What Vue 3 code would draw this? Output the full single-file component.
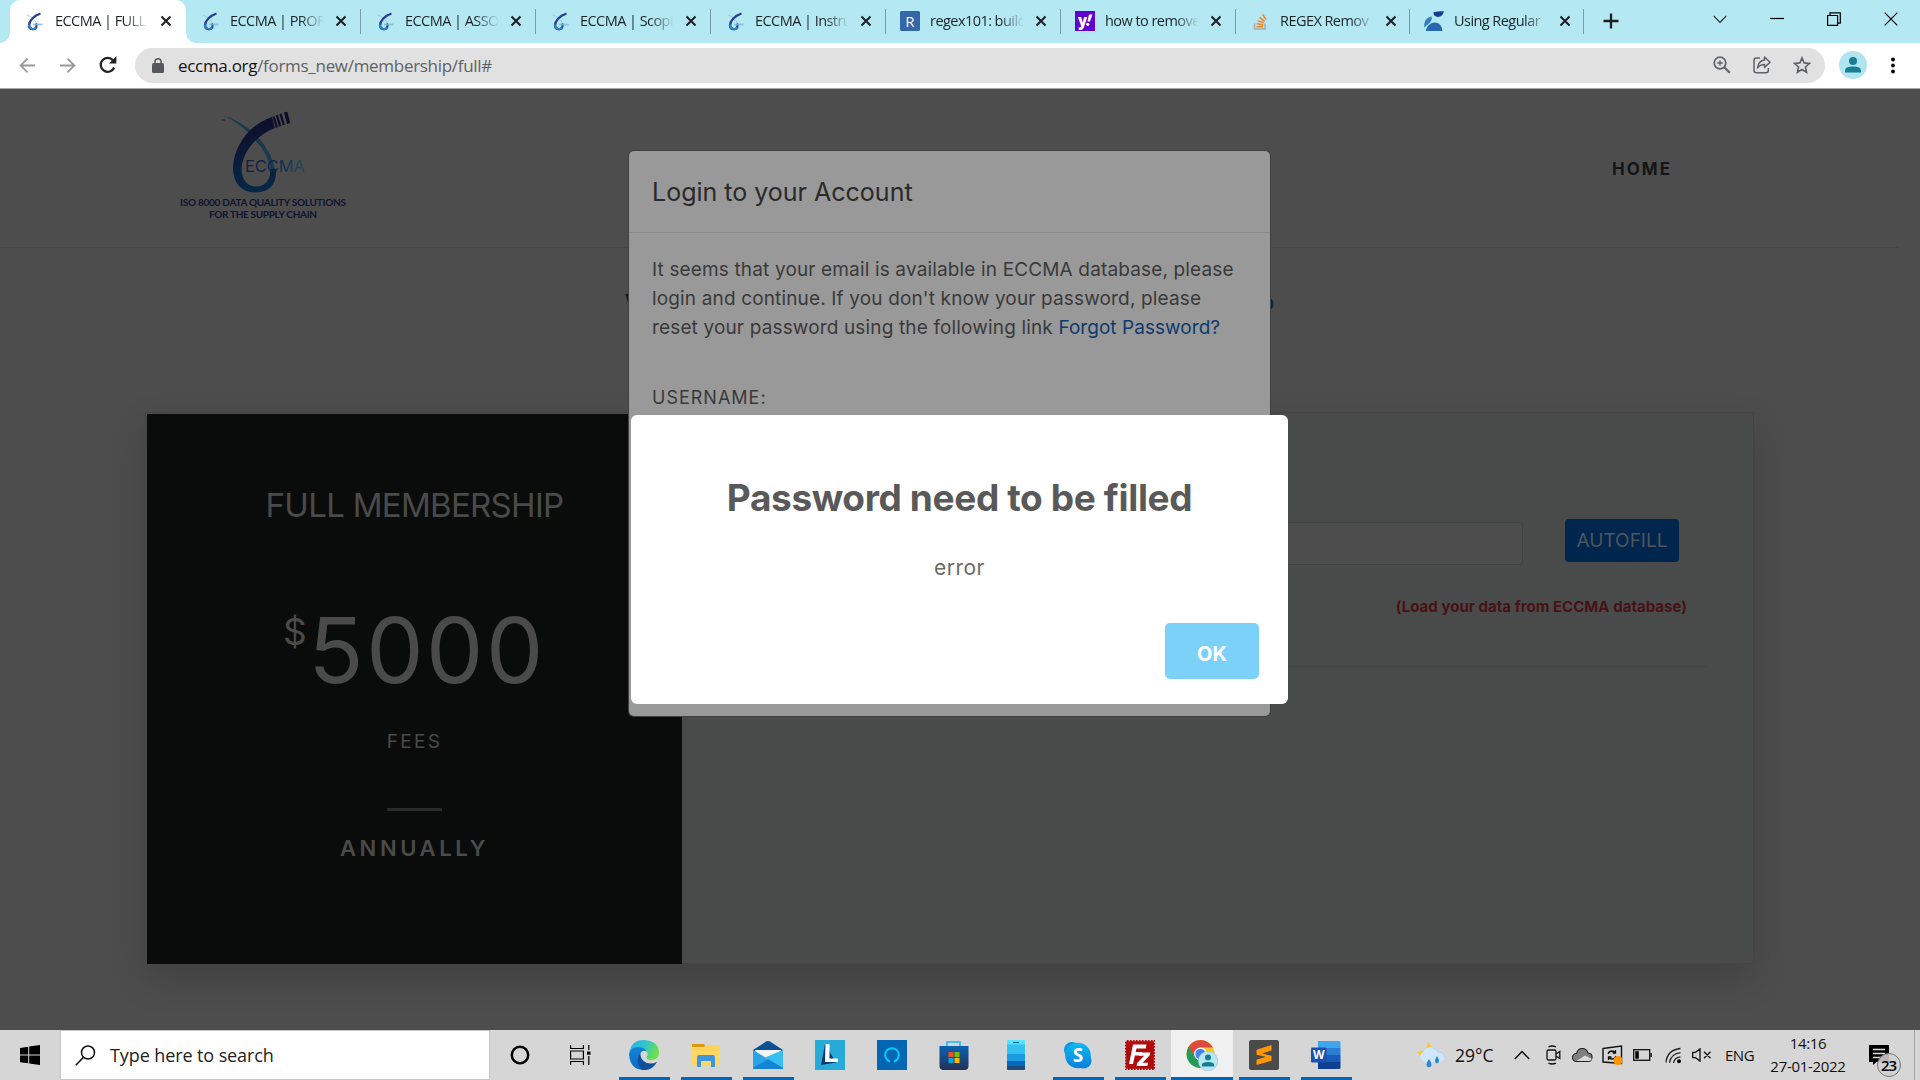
<script setup>
const tabs = [
  { title: 'ECCMA | FULL', icon: 'eccma', active: true },
  { title: 'ECCMA | PROF', icon: 'eccma' },
  { title: 'ECCMA | ASSO', icon: 'eccma' },
  { title: 'ECCMA | Scopi', icon: 'eccma' },
  { title: 'ECCMA | Instru', icon: 'eccma' },
  { title: 'regex101: build', icon: 'regex' },
  { title: 'how to remove', icon: 'yahoo' },
  { title: 'REGEX Remov', icon: 'stack' },
  { title: 'Using Regular', icon: 'using' },
]

const apps = [
  { name: 'edge', open: true },
  { name: 'explorer', open: true },
  { name: 'mail', open: true },
  { name: 'lens' },
  { name: 'alexa' },
  { name: 'store' },
  { name: 'phone' },
  { name: 'skype', open: true },
  { name: 'filezilla', open: true },
  { name: 'chrome', open: true, active: true },
  { name: 'sublime', open: true },
  { name: 'word', open: true },
]
</script>

<template>
  <div class="screen">
    <div class="tabstrip">
      <div v-for="(t, i) in tabs" :key="i" class="tab" :class="{ active: t.active }">
        <svg v-if="t.icon === 'eccma'" class="fav" viewBox="0 0 17 19">
          <path d="M1 3C8 6 11 10 10.500 14" fill="none" stroke="#8cc3e2" stroke-width=".8" />
          <path d="M14.500 1.500C8 3.500 3 9 3 13.500C3 18 9 18 10.200 15.500C10.800 14 10.600 12.500 10 11.500" fill="none" stroke="#2b3f8f" stroke-width="2.300" />
          <path d="M3 12.500C3 18 9 18 10.200 15.500" fill="none" stroke="#2f7fc8" stroke-width="2.300" />
          <path d="M7 12.500h9.500" stroke="#7bb8de" stroke-width="1.800" opacity=".8" />
        </svg>
        <svg v-else-if="t.icon === 'regex'" class="fav sq" viewBox="0 0 20 20">
          <rect width="20" height="20" rx="1.500" fill="#3566a8" />
          <text x="10" y="15.500" text-anchor="middle" fill="#fff" font-family="Open Sans, sans-serif" font-size="15">R</text>
        </svg>
        <svg v-else-if="t.icon === 'yahoo'" class="fav sq" viewBox="0 0 20 20">
          <rect width="20" height="20" fill="#6001d2" />
          <text x="3" y="14.500" fill="#fff" font-family="Open Sans, sans-serif" font-size="15" font-weight="800">y</text>
          <path d="M14 3.500h3.500l-2.500 7h-2.500z" fill="#fff" /><circle cx="12.700" cy="13.300" r="1.600" fill="#fff" />
        </svg>
        <svg v-else-if="t.icon === 'stack'" class="fav" viewBox="0 0 17 19">
          <path d="M2.500 11.500V17h10.500v-5.500" fill="none" stroke="#a9abae" stroke-width="1.500" />
          <path d="M4.500 14.700h6.500M4.800 11.800l6.300.9M5.700 8.600l5.900 2.300M7.700 5.400l4.900 3.900M10.600 2.300l3.300 5" stroke="#f08028" stroke-width="1.500" />
        </svg>
        <svg v-else class="fav sq" viewBox="0 0 20 20">
          <path d="M9.500 1.200Q15 0 20 0.300Q18.500 6 14 6Q9 5.500 9.500 1.200Z" fill="#1b3c92" />
          <path d="M0 16.500Q0 6.500 7.500 5.500Q9.500 10 0 16.500Z" fill="#2f7fc2" />
          <path d="M1.500 20Q4 11.500 11 11.500Q18 12 18.500 20Z" fill="#2768b0" />
        </svg>
        <span class="tab-title">{{ t.title }}</span>
        <svg class="close" viewBox="0 0 12 12"><path d="M1.500 1.500l9 9M10.500 1.500l-9 9" stroke="#1d1f22" stroke-width="2" /></svg>
      </div>
      <svg class="plus" viewBox="0 0 16 16"><path d="M8 .5v15M.5 8h15" stroke="#1d1f22" stroke-width="2.300" /></svg>
      <div class="win">
        <svg width="14" height="9" viewBox="0 0 14 9"><path d="M.7.8L7 7.500L13.300.8" fill="none" stroke="#222" stroke-width="1.100" /></svg>
        <svg width="14" height="14" viewBox="0 0 14 14"><path d="M0 6.500h14" stroke="#000" stroke-width="1.200" /></svg>
        <svg width="14" height="14" viewBox="0 0 14 14"><path d="M.6 3.500h10v9.900h-10zM3 3.500V.9h10.300v10.200h-2.600" fill="none" stroke="#000" stroke-width="1.200" /></svg>
        <svg width="14" height="14" viewBox="0 0 14 14"><path d="M.7.7l12.600 12.600M13.300.7L.7 13.300" stroke="#000" stroke-width="1.100" /></svg>
      </div>
    </div>

    <div class="toolbar">
      <svg class="nav" viewBox="0 0 18 18"><path d="M17 9H2M9 1.700L1.700 9L9 16.300" fill="none" stroke="#9a9a9a" stroke-width="1.900" /></svg>
      <svg class="nav fwd" viewBox="0 0 18 18"><path d="M1 9h15M9 1.700L16.300 9L9 16.300" fill="none" stroke="#9a9a9a" stroke-width="1.900" /></svg>
      <svg class="nav reload" viewBox="0 0 18 18"><path d="M15.200 11.500A7 7 0 1 1 14 4.200" fill="none" stroke="#202124" stroke-width="2.200" /><path d="M17.400 0v7.500H10z" fill="#202124" /></svg>
      <div class="omnibox">
        <svg class="lock" viewBox="0 0 12 15"><rect y="5" width="12" height="10" rx="1.500" fill="#55585e" /><path d="M3 6V3.800a3 3 0 0 1 6 0V6" fill="none" stroke="#55585e" stroke-width="1.500" /></svg>
        <span class="url">eccma.org<span class="path">/forms_new/membership/full#</span></span>
        <span class="omni-icons">
          <svg width="18" height="18" viewBox="0 0 18 18"><g fill="none" stroke="#5f6368" stroke-width="1.700"><circle cx="7" cy="7" r="5.800" /><path d="M11.200 11.200l5.600 5.600" stroke-width="2.200" /><path d="M7 4.200v5.600M4.200 7h5.600" stroke-width="1.400" /></g></svg>
          <svg width="18" height="18" viewBox="0 0 18 18"><g fill="none" stroke="#5f6368" stroke-width="1.500" stroke-linejoin="round"><path d="M7 2H3.500Q1 2 1 4.500v9.700Q1 16.700 3.500 16.700h9.500Q15.300 16.700 15.300 14.200V12" /><path d="M11.500 1l5.600 5.200l-5.600 5.200V8.500Q7 8.500 4.500 12Q5.500 4.500 11.500 3.900z" /></g></svg>
          <svg width="18" height="18" viewBox="0 0 18 18"><path d="M9 1.900l2.100 5l5.400.5l-4.100 3.600l1.200 5.300L9 13.500l-4.600 2.800l1.200-5.300L1.500 7.400l5.400-.5z" fill="none" stroke="#5f6368" stroke-width="1.600" /></svg>
        </span>
      </div>
      <svg class="avatar" viewBox="0 0 28 28"><circle cx="14" cy="14" r="14" fill="#b0e5f0" /><circle cx="14" cy="10" r="4" fill="#177e93" /><path d="M6 21.500v-1.800Q6 15.500 14 15.500T22 19.700v1.800z" fill="#177e93" /></svg>
      <svg class="dots" viewBox="0 0 4 16"><circle cx="2" cy="2" r="1.900" /><circle cx="2" cy="8" r="1.900" /><circle cx="2" cy="14" r="1.900" /></svg>
    </div>

    <main class="page">
      <header class="site-head">
        <svg class="logo" viewBox="0 0 170 112">
          <defs>
            <linearGradient id="ribbon" x1="0" y1="0" x2="0" y2="1"><stop offset="0" stop-color="#0e0e2a" /><stop offset=".5" stop-color="#0b1a38" /><stop offset="1" stop-color="#062847" /></linearGradient>
            <linearGradient id="word" x1="0" y1="0" x2="1" y2="0"><stop offset="0" stop-color="#1a1c3a" /><stop offset=".5" stop-color="#0b2a4e" /><stop offset="1" stop-color="#1b4d5a" /></linearGradient>
          </defs>
          <path d="M44 3.500Q66 11 80 26Q94 42 97.500 60L93 60Q90 42 77 29Q64 13 44 3.500Z" fill="#1a3a4c" />
          <path d="M98 58C99 74 91 81.500 78 81.500C63 81.500 55 72 55 56C56 36 70 14 94 6L97 17C78 24 64 42 63.500 58C64 70 70 75.500 78 75.500C88 75.500 93 68 92 58Z" fill="url(#ribbon)" />
          <path d="M95.500 5.500l3.500 11M98.800 4l3.400 11.300M102.500 2.700l3.300 11.300M107.200 1.300l3 11.200" stroke="#0e0e2a" stroke-width="2.300" />
          <path d="M107.800 1.200l2.800 11" stroke="#0e0e2a" stroke-width="3.200" />
          <path d="M43 9h4" stroke="#222" stroke-width="1" />
          <text x="67" y="60.500" textLength="60" font-family="Inter, sans-serif" font-size="16.500" fill="url(#word)">ECCMA</text>
          <text x="2" y="94.500" textLength="166" font-family="Lato, sans-serif" font-weight="700" font-size="10" fill="#10132f">ISO 8000 DATA QUALITY SOLUTIONS</text>
          <text x="31" y="106.500" textLength="108" font-family="Lato, sans-serif" font-weight="700" font-size="10" fill="#10132f">FOR THE SUPPLY CHAIN</text>
        </svg>
        <a class="home">HOME</a>
      </header>
      <h1 class="heading"><span>W</span><span class="blue">p</span></h1>
      <section class="card">
        <aside class="plan">
          <div class="plan-name">FULL MEMBERSHIP</div>
          <div class="price"><sup>$</sup><span>5000</span></div>
          <div class="fees">FEES</div>
          <div class="rule"></div>
          <div class="annual">ANNUALLY</div>
        </aside>
        <div class="form">
          <div class="row"><div class="field"></div><button class="autofill">AUTOFILL</button></div>
          <p class="hint">(Load your data from ECCMA database)</p>
          <div class="hr"></div>
        </div>
      </section>
    </main>

    <div class="login">
      <div class="login-head">Login to your Account</div>
      <div class="login-body">
        <p>It seems that your email is available in ECCMA database, please<br>login and continue. If you don't know your password, please<br>reset your password using the following link <a>Forgot Password?</a></p>
        <label>USERNAME:</label>
      </div>
    </div>

    <div class="alert">
      <div class="alert-title">Password need to be filled</div>
      <div class="alert-text">error</div>
      <div class="alert-foot"><button class="ok">OK</button></div>
    </div>

    <footer class="taskbar">
      <div class="start"><svg width="20" height="20" viewBox="0 0 20 20"><path d="M0 2.900l8.200-1.200v7.800H0zM9.200 1.500L20 0v9.500H9.200zM0 10.500h8.200v7.800L0 17.200zM9.200 10.500H20V20L9.200 18.500z" /></svg></div>
      <div class="search">
        <svg width="21" height="21" viewBox="0 0 21 21"><circle cx="13" cy="7.500" r="6.500" fill="none" stroke="#111" stroke-width="1.500" /><path d="M8.500 12.200L.8 20.200" stroke="#111" stroke-width="1.600" /></svg>
        <span>Type here to search</span>
      </div>
      <div class="slot cortana"><svg width="20" height="20" viewBox="0 0 20 20"><circle cx="10" cy="10" r="8.200" fill="none" stroke="#000" stroke-width="2.500" /></svg></div>
      <div class="slot taskview"><svg width="21" height="20" viewBox="0 0 21 20"><g fill="none" stroke="#000" stroke-width="1.200"><path d="M.6 0v3.500h12.800V0M.6 20v-3.500h12.800V20M.6 6h12.800v8H.6zM18.800 0v5M18.800 11v9" /></g><path d="M17 6.500h3.500v3.200H17z" /></svg></div>
      <div v-for="a in apps" :key="a.name" class="slot app" :class="{ open: a.open, active: a.active }">
        <svg v-if="a.name === 'edge'" width="30" height="30" viewBox="0 0 30 30">
          <defs>
            <linearGradient id="eg1" x1="0" y1="0" x2="1" y2=".35"><stop offset="0" stop-color="#2aaef0" /><stop offset=".55" stop-color="#2fc4cf" /><stop offset="1" stop-color="#6ae04c" /></linearGradient>
            <linearGradient id="eg2" x1="0" y1="0" x2="0" y2="1"><stop offset="0" stop-color="#1482d8" /><stop offset="1" stop-color="#0a6cc8" /></linearGradient>
          </defs>
          <path d="M.3 13Q2 0 15 0Q30 1 30 13Q29.500 20 22 20Q17 19.500 17.500 17Q20 14 17 10Q9 4 .3 13Z" fill="url(#eg1)" />
          <path d="M0 14Q2 7 9 7Q16 7 18 12Q14 9 11.500 13Q8 22 17 28Q18 29.500 15 30Q1 30 0 14Z" fill="url(#eg2)" />
          <path d="M11.500 12.500Q5 22 13 29.700Q23 31.500 28 22Q20 25.500 14.500 21Q10.500 17 11.500 12.500Z" fill="#10519c" />
        </svg>
        <svg v-else-if="a.name === 'explorer'" width="28" height="24" viewBox="0 0 28 24">
          <path d="M0 1h12l2 3H0z" fill="#dd9b0c" /><path d="M0 4.500h11L14 2h14v20.500H0z" fill="#fcd25c" /><path d="M0 8h28v14.500H0z" fill="#ffd766" />
          <path d="M5 24V14q0-2 2-2h14q2 0 2 2v10h-4v-6H9v6z" fill="#3c97dd" />
        </svg>
        <svg v-else-if="a.name === 'mail'" width="30" height="28" viewBox="0 0 30 28">
          <path d="M0 9L13 .6Q15-.6 17 .6L30 9v4H0z" fill="#0b4f94" /><path d="M2 9h26v9H2z" fill="#f3f3f3" /><path d="M0 9l15 9L0 28z" fill="#2ba3e8" /><path d="M30 9v19L12 16.500z" fill="#38bdf2" /><path d="M0 28V27l15-9l15 9v1z" fill="#1583d6" />
        </svg>
        <svg v-else-if="a.name === 'lens'" width="30" height="30" viewBox="0 0 30 30"><rect width="30" height="30" fill="#26abd9" /><path d="M10 4L6 25l15-2.500z" fill="#093a73" /><path d="M10.500 4h4v14.500H23V22H10z" fill="#fff" /></svg>
        <svg v-else-if="a.name === 'alexa'" width="30" height="30" viewBox="0 0 30 30"><rect width="30" height="30" fill="#0266b4" /><path d="M13 21.500A6.800 6.800 0 1 1 17 21.500" fill="none" stroke="#04caf6" stroke-width="1.900" /></svg>
        <svg v-else-if="a.name === 'store'" width="30" height="30" viewBox="0 0 30 30"><defs><linearGradient id="st" x1="0" y1="0" x2="0" y2="1"><stop offset="0" stop-color="#0a62b0" /><stop offset="1" stop-color="#252f55" /></linearGradient></defs><path d="M8 7V2h13v5" fill="none" stroke="#22b8f2" stroke-width="1.700" /><path d="M.5 6h29v20q0 4-4 4h-21q-4 0-4-4z" fill="url(#st)" /><path d="M9.500 12h5v5h-5z" fill="#f25022" /><path d="M15.500 12h5v5h-5z" fill="#7fba00" /><path d="M9.500 18h5v5h-5z" fill="#00a4ef" /><path d="M15.500 18h5v5h-5z" fill="#ffb900" /></svg>
        <svg v-else-if="a.name === 'phone'" width="18" height="30" viewBox="0 0 18 30"><rect width="18" height="30" rx="1" fill="#50e6ff" /><path d="M0 4.500h18V14H0z" fill="#35c1f1" /><path d="M0 14h18v7H0z" fill="#199be2" /><path d="M0 21h18v5H0z" fill="#0669bc" /><path d="M0 26h18v3q0 1-1 1H1q-1 0-1-1z" fill="#1b4a7c" /><path d="M6 2.500h6" stroke="#195a8c" /></svg>
        <svg v-else-if="a.name === 'skype'" width="28" height="28" viewBox="0 0 28 28"><defs><linearGradient id="sk" x1="0" y1="0" x2="0" y2="1"><stop offset="0" stop-color="#0bbcf2" /><stop offset="1" stop-color="#0a7fdc" /></linearGradient></defs><circle cx="8" cy="9" r="8" fill="#1296dd" /><circle cx="19.500" cy="19.500" r="8" fill="#0a84dd" /><circle cx="14" cy="14.500" r="12.800" fill="url(#sk)" /><text x="14" y="21" text-anchor="middle" fill="#fff" font-family="Open Sans, sans-serif" font-weight="700" font-size="19">S</text></svg>
        <svg v-else-if="a.name === 'filezilla'" width="30" height="30" viewBox="0 0 30 30"><rect x=".8" y=".8" width="28.400" height="28.400" fill="#b00a0c" stroke="#b00a0c" stroke-width="1.600" /><rect x=".6" y=".6" width="28.800" height="28.800" fill="none" stroke="#f3c9c9" stroke-width="1.200" stroke-dasharray="1.300 1.700" /><path d="M8 4.500h13.500l-.9 4H11.500l-.8 3.500h6.500l-.8 3.500H9.900L8 24H4z" fill="#fff" /><path d="M14.500 12.500h10.800l-.7 3l-7 7.300h5.500l-.8 3.200H11.500l.7-3l7-7.300h-5.400z" fill="#fff" /></svg>
        <svg v-else-if="a.name === 'chrome'" width="32" height="32" viewBox="0 0 32 32"><circle cx="14.500" cy="15" r="14" fill="#f7c52e" /><path d="M2.400 8A14 14 0 0 0 14.500 29L20 18L14.500 15z" fill="#1f9d58" /><path d="M14.500 8.500h12.400L26.600 8A14 14 0 0 0 2.400 8l6 9z" fill="#dd4b3e" /><circle cx="14.500" cy="15" r="6.500" fill="#fff" /><circle cx="14.500" cy="15" r="5.200" fill="#4283ee" /><circle cx="22" cy="22" r="9.800" fill="#b5e8f2" stroke="#9ac" stroke-width=".5" /><circle cx="22" cy="18.500" r="3" fill="#177e93" /><path d="M15.800 27.500v-1.500Q15.800 23 22 23T28.200 26v1.500z" fill="#177e93" /></svg>
        <svg v-else-if="a.name === 'sublime'" width="30" height="30" viewBox="0 0 30 30"><rect width="30" height="30" rx="2" fill="#4a4a4a" /><path d="M7.500 9.800L22.500 5v5.400L13 13.500l9.500 2.200v5.100L7.500 25v-5.200l9.400-3.100l-9.400-2z" fill="#ff9800" /></svg>
        <svg v-else width="30" height="28" viewBox="0 0 30 28"><path d="M7 0h21q1.500 0 1.500 1.500V7H7z" fill="#41a5ee" /><path d="M7 7h22.500v7H7z" fill="#2b7cd3" /><path d="M7 14h22.500v7H7z" fill="#185abd" /><path d="M7 21h22.500v5.500Q29.500 28 28 28H7z" fill="#103f91" /><rect y="6.500" width="15.500" height="15" rx="1.300" fill="#1c51ae" /><text x="7.700" y="18.300" text-anchor="middle" fill="#fff" font-family="Open Sans, sans-serif" font-weight="700" font-size="12">W</text></svg>
      </div>
      <div class="tray">
        <svg width="28" height="28" viewBox="0 0 28 28"><path d="M0 11Q5 11 8 8Q11 5 10.500 1Q17 5 14 13Q10 17 4 15.500z" fill="#fcc62d" /><path d="M6 20a5 5 0 0 1 0-9Q9 5 16 6.500Q20 7 21 11Q27 11 27.500 16Q27 21 22 21H7z" fill="#cfe6fb" /><path d="M16 7q4 1 5 4q6 0 6.500 5" stroke="#a8cff2" fill="none" /><path d="M12 18q5 7 0 8.500Q7 25 12 18zM20 15q4 6 0 7.500Q16 21 20 15z" fill="#2c86d8" /></svg>
        <span class="temp">29°C</span>
        <svg width="16" height="10" viewBox="0 0 16 10" class="t-caret"><path d="M.8 9L8 1.500L15.200 9" fill="none" stroke="#111" stroke-width="1.500" /></svg>
        <svg width="15" height="20" viewBox="0 0 15 20" class="t-meet"><g fill="none" stroke="#111" stroke-width="1.300"><rect x="1" y="5" width="9" height="10" rx="1.500" /><path d="M10 9l3.800-2.500v7L10 11M2.500 1.800Q6 .2 10 1.800M2.500 18.200Q6 19.800 10 18.200" /></g></svg>
        <svg width="21" height="16" viewBox="0 0 21 16" class="t-cloud"><path d="M4.500 14.500a4 4 0 0 1 0-8Q6 1 11 1.500Q15 2 16 6q4.500.5 4 4.800Q19.500 14.500 16 14.500z" fill="#808080" stroke="#222" stroke-width="1.100" /><path d="M4.500 14L13 8.500l7 3.500q-1 2-4 2z" fill="#d8d8d8" /></svg>
        <svg width="21" height="20" viewBox="0 0 21 20" class="t-upd"><path d="M1 3.500L19.500 1v17.500L1 17z" fill="none" stroke="#111" stroke-width="1.400" /><path d="M6 9q1-3 4-3q2 0 3.500 2M13.500 5v3h-3M14 11q-1 3-4 3q-2 0-3.500-2M6.500 15v-3h3" fill="none" stroke="#111" stroke-width="1.300" /><circle cx="16" cy="15.500" r="4.500" fill="#ff9500" /></svg>
        <svg width="19" height="12" viewBox="0 0 19 12" class="t-bat"><rect x=".7" y=".7" width="16" height="10.600" fill="none" stroke="#111" stroke-width="1.300" /><path d="M2.300 2.300h3.500v7.400H2.300zM17.500 4h1.300v4h-1.300z" /></svg>
        <svg width="17" height="17" viewBox="0 0 17 17" class="t-wifi"><g fill="none" stroke="#222" stroke-width="1.300"><path d="M1 15.500Q2 3 15.500 1.500M4.600 15.800Q5.500 7 15.500 5.600M8.500 16Q9.300 10.500 15.500 9.800" /></g><circle cx="14" cy="14.300" r="2" /></svg>
        <svg width="20" height="14" viewBox="0 0 20 14" class="t-vol"><path d="M.7 4.300h2.800L8 .9v12.200L3.500 9.700H.7zM12 3.800l6.500 6.500M18.500 3.800L12 10.300" fill="none" stroke="#111" stroke-width="1.300" /></svg>
        <span class="eng">ENG</span>
        <div class="clock"><div>14:16</div><div>27-01-2022</div></div>
        <div class="notif"><svg width="34" height="32" viewBox="0 0 34 32"><path d="M0 0h20v17H7.500L4 20v-3H0z" /><path d="M4 4.500h12M4 8.500h12M4 12.500h8" stroke="#ddd" stroke-width="1.300" /><circle cx="20" cy="20" r="11.500" fill="#d2d2d2" fill-opacity=".88" stroke="#777" /><text x="12" y="25.500" font-family="Open Sans, sans-serif" font-weight="600" font-size="15" textLength="16">23</text></svg></div>
        <div class="peek"></div>
      </div>
    </footer>
  </div>
</template>

<style>
body { margin: 0; overflow: hidden; }
</style>

<style scoped>
* { box-sizing: border-box; }
svg { display: block; flex: none; }
.screen { position: relative; width: 1920px; height: 1080px; overflow: hidden; display: flex; flex-direction: column; background: #4d4d4d; font-family: "Open Sans", "Noto Sans", sans-serif; }

.tabstrip { height: 43px; flex: none; background: #b4e8f2; display: flex; padding-left: 10px; }
.tab { position: relative; width: 175px; height: 43px; display: flex; align-items: center; padding: 0 0 1px 16px; }
.tab:first-child { width: 176px; }
.tab:nth-child(8), .tab:nth-child(9) { width: 174px; }
.tab:not(.active)::after { content: ""; position: absolute; right: 0; top: 9px; width: 1px; height: 25px; background: #7b9ba2; }
.tab.active { background: #fff; border-radius: 10px 10px 0 0; }
.tab.active::before, .tab.active::after { content: ""; position: absolute; bottom: 0; width: 10px; height: 10px; }
.tab.active::before { left: -10px; background: radial-gradient(circle at 0 0, transparent 9.500px, #fff 10px); }
.tab.active::after { right: -10px; background: radial-gradient(circle at 100% 0, transparent 9.500px, #fff 10px); }
.fav { width: 17px; height: 19px; margin-right: 12px; }
.fav.sq { width: 20px; height: 20px; margin-left: -2px; margin-right: 11px; }
.tab:not(.active) .fav { margin-right: 11px; }
.tab:not(.active) .fav.sq { margin-right: 10px; }
.tab-title { width: 94px; white-space: nowrap; font-size: 14.500px; letter-spacing: -0.550px; line-height: 22px; padding-bottom: 1px; color: #1c2427; -webkit-mask-image: linear-gradient(to right, #000 70px, transparent 94px); mask-image: linear-gradient(to right, #000 70px, transparent 94px); }
.close { width: 12px; height: 12px; margin-left: 11px; }
.plus { width: 16px; height: 16px; margin: 13px 0 0 19px; }
.win { margin-left: auto; display: flex; align-items: center; height: 38px; gap: 43px; padding-right: 22px; }

.toolbar { height: 46px; flex: none; background: #fff; display: flex; align-items: center; padding: 0 0 1px 19px; border-bottom: 1px solid #a9a9a9; }
.nav { width: 17px; height: 17px; }
.nav.fwd { margin-left: 23px; }
.nav.reload { width: 18px; height: 18px; margin-left: 23px; }
.omnibox { width: 1690px; height: 35px; margin-left: 18px; border-radius: 18px; background: #e1e1e1; display: flex; align-items: center; padding: 0 14px 0 17px; }
.lock { width: 12px; height: 15px; margin-right: 14px; }
.url { font-size: 17px; letter-spacing: -0.300px; color: #111; white-space: nowrap; }
.path { color: #5e6165; }
.omni-icons { margin-left: auto; display: flex; gap: 22px; }
.avatar { width: 28px; height: 28px; margin-left: 14px; }
.dots { width: 4px; height: 17px; margin-left: 24px; }

.page { height: 941px; flex: none; background: #4d4d4d; font-family: Inter, sans-serif; display: flow-root; }
.site-head { height: 159px; width: 1898px; border-bottom: 1px solid #464646; display: flex; justify-content: space-between; padding: 22px 226px 0 178px; }
.logo { width: 170px; height: 112px; }
.home { margin-top: 46px; font-size: 17px; font-weight: 700; letter-spacing: 2px; line-height: 24px; color: #151515; }
.heading { margin: 39px 0 0 625px; width: 649px; height: 30px; line-height: 30px; font-size: 22px; font-weight: 700; color: #161616; display: flex; justify-content: space-between; }
.blue { color: #06264b; }
.card { margin: 95px 0 0 145px; width: 1609px; height: 552px; border: 1px solid #434544; display: flex; background: #494b4a; padding: 1px 0 0 1px; box-shadow: 0 15px 35px rgba(0, 0, 0, .16); }
.plan { width: 535px; height: 550px; flex: none; background: #0a0c0b; color: #4a4a4a; display: flex; flex-direction: column; align-items: center; }
.plan-name { margin-top: 71px; font-size: 33px; line-height: 40px; letter-spacing: -0.700px; }
.price { display: flex; margin-top: 70px; height: 110px; font-size: 91px; line-height: 110px; letter-spacing: 2.500px; }
.price sup { font-size: 37px; line-height: 40px; margin: 17px -1px 0 0; }
.fees { margin-top: 25px; font-size: 19px; letter-spacing: 2.300px; line-height: 24px; }
.rule { width: 55px; height: 3px; margin-top: 54px; background: #292a2a; }
.annual { margin-top: 24px; font-size: 22px; font-weight: 600; letter-spacing: 3.600px; line-height: 26px; }
.form { width: 1025px; padding-top: 105px; }
.row { display: flex; }
.field { width: 771px; margin: 3px 0 0 70px; height: 43px; border: 1px solid #414342; border-radius: 4px; background: #4d4d4d; }
.autofill { width: 114px; height: 43px; margin-left: 42px; border: 0; border-radius: 4px; background: #00264e; color: #4f555c; font-family: inherit; font-size: 19px; padding: 0; }
.hint { margin: 31px 0 0; text-align: right; padding-right: 20px; font-size: 15px; font-weight: 700; letter-spacing: 0.030px; line-height: 22px; color: #481115; white-space: nowrap; }
.hr { height: 1px; margin: 48px 0 0 40px; background: #434544; }

.login { position: absolute; left: 629px; top: 151px; width: 641px; height: 565px; background: #999; border-radius: 5px; box-shadow: 0 0 0 1px #3f3f3f; font-family: Inter, sans-serif; color: #3a3a3a; }
.login-head { height: 82px; border-bottom: 1px solid #888a8b; padding: 24px 23px; font-size: 25px; line-height: 34px; color: #2a2a2a; }
.login-body { padding: 22px 23px; }
.login p { margin: 0; font-size: 19px; line-height: 29px; white-space: nowrap; letter-spacing: 0.150px; }
.login a { color: #0d3a6c; letter-spacing: 0.050px; }
.login label { display: block; margin-top: 42px; font-size: 18px; line-height: 28px; letter-spacing: 1px; }

.alert { position: absolute; left: 631px; top: 415px; width: 657px; height: 289px; background: #fff; border-radius: 6px; font-family: Inter, sans-serif; text-align: center; white-space: nowrap; }
.alert-title { margin-top: 59px; font-size: 37px; font-weight: 700; letter-spacing: -0.360px; line-height: 48px; color: #595959; }
.alert-text { margin-top: 31px; font-size: 21px; letter-spacing: 0.500px; line-height: 30px; color: #6a6a6a; }
.alert-foot { display: flex; justify-content: flex-end; margin-top: 40px; padding-right: 29px; }
.ok { width: 94px; height: 56px; border: 0; border-radius: 5px; background: #7cd1f9; color: #fff; font-family: inherit; font-size: 20px; font-weight: 700; padding: 6px 0 0; }

.taskbar { height: 50px; flex: none; background: #d6d6d6; display: flex; color: #111; }
.start { width: 60px; display: flex; align-items: center; padding-left: 20px; }
.search { width: 430px; height: 50px; border: 1px solid #c6c6c6; background: #fff; display: flex; align-items: center; padding-left: 14px; font-size: 18px; letter-spacing: -0.100px; }
.search span { margin-left: 14px; color: #222; }
.slot { width: 62px; height: 50px; display: flex; align-items: center; justify-content: center; position: relative; }
.cortana { width: 60px; }
.taskview { width: 60px; margin-right: 3px; }
.app.open::after { content: ""; position: absolute; left: 6px; right: 5px; bottom: 0; height: 3px; background: #0067b8; }
.app.active { background: #f0f0f0; }
.app.active::after { left: 0; right: 0; }
.tray { flex: 1; display: flex; align-items: center; padding-left: 60px; }
.temp { margin-left: 10px; font-size: 17.500px; width: 38px; white-space: nowrap; }
.t-caret { margin-left: 21px; }
.t-meet { margin-left: 16px; }
.t-cloud { margin-left: 11px; }
.t-upd { margin-left: 9px; }
.t-bat { margin-left: 10px; }
.t-wifi { margin-left: 13px; }
.t-vol { margin-left: 10px; }
.eng { margin-left: 13px; width: 29px; font-size: 15px; letter-spacing: -0.500px; }
.clock { width: 90px; margin-left: 9px; text-align: center; font-size: 15px; line-height: 23px; letter-spacing: -0.300px; white-space: nowrap; }
.notif { margin-left: 16px; padding-top: 12px; }
.peek { margin-left: 11px; width: 1px; height: 50px; background: #a5a5a5; }
</style>
